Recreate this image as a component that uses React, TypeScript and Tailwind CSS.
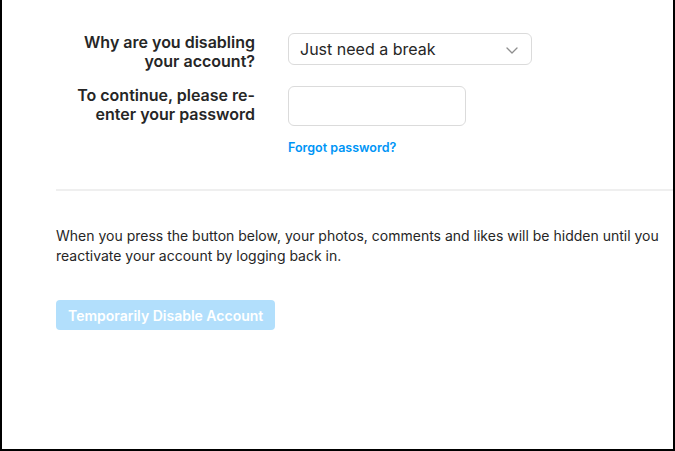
import React from 'react';

export default function App() {
  return (
    <div
      className="w-[675px] h-[451px] bg-white border-l-2 border-r-2 border-b-2 border-black overflow-hidden text-[#262626]"
      style={{ fontFamily: 'Inter, "Liberation Sans", sans-serif' }}
    >
      <div className="pl-[54px] pt-[33px]">
        {/* Reason */}
        <div className="grid grid-cols-[199px_1fr] gap-x-[33px]">
          <label className="text-right text-[16px] leading-[18.5px] font-semibold">
            Why are you disabling your account?
          </label>
          <div className="relative w-[244px] h-[32px] border border-[#dbdbdb] rounded-[6px] flex items-center pl-[11px]">
            <span className="text-[16px]">Just need a break</span>
            <svg
              className="absolute right-[13px] top-[13px]"
              width="12"
              height="7"
              viewBox="0 0 12 7"
              fill="none"
            >
              <path d="M1 1l5 5 5-5" stroke="#8e8e8e" strokeWidth="1.3" strokeLinecap="round" strokeLinejoin="round" />
            </svg>
          </div>
        </div>

        {/* Password */}
        <div className="grid grid-cols-[199px_1fr] gap-x-[33px] mt-[16px]">
          <label className="text-right text-[16px] leading-[18.5px] font-semibold">
            To continue, please re-enter your password
          </label>
          <div>
            <div className="w-[178px] h-[40px] border border-[#dbdbdb] rounded-[6px]" />
            <a className="block mt-[15px] text-[12.5px] leading-[14px] font-semibold text-[#0095f6]">
              Forgot password?
            </a>
          </div>
        </div>

        <div className="mt-[34px] h-[2px] bg-[#efefef]" />

        <p className="mt-[35px] text-[14px] leading-[20px] pr-[12px]">
          When you press the button below, your photos, comments and likes will be hidden until you
          reactivate your account by logging back in.
        </p>

        <button className="mt-[34px] h-[30px] px-[12px] rounded-[4px] bg-[#b2dffc] text-white text-[14px] font-semibold">
          Temporarily Disable Account
        </button>
      </div>
    </div>
  );
}
